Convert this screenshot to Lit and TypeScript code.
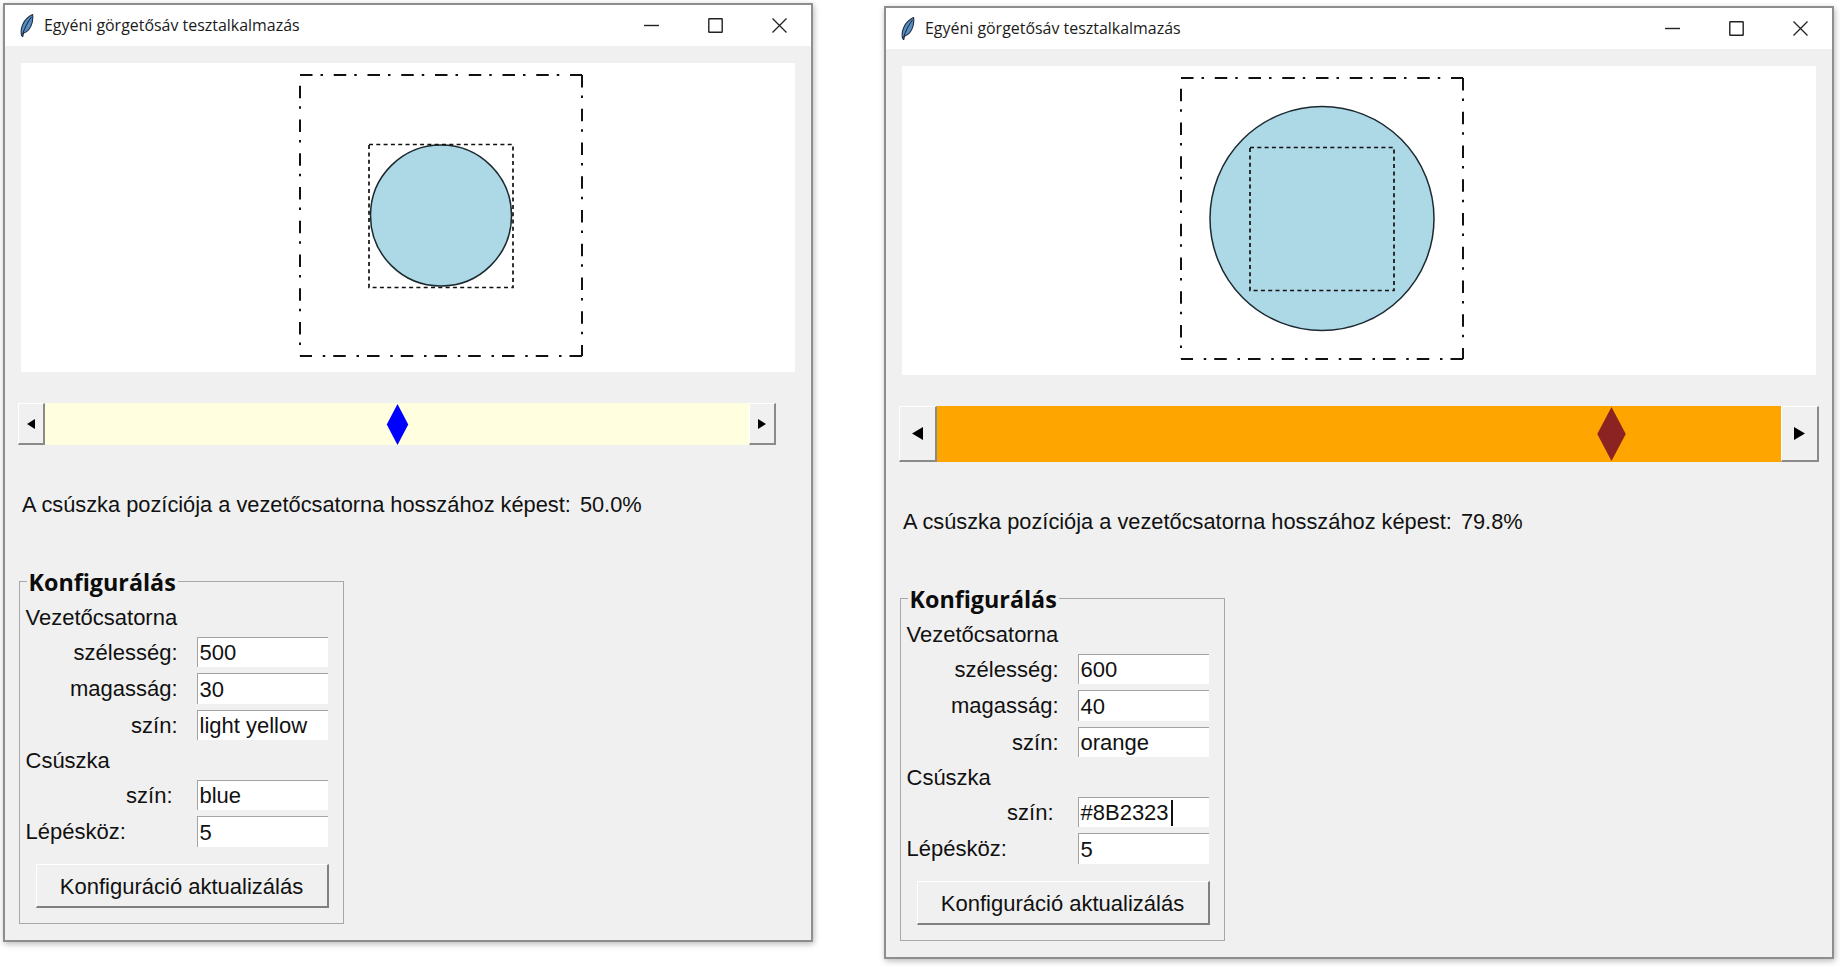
import { LitElement, html, css, svg } from "lit";
import { customElement, property } from "lit/decorators.js";

interface WindowConfig {
  width: number;
  circleR: number;
  trackWidth: number;
  trackHeight: number;
  arrowButton: number;
  arrowW: number;
  arrowH: number;
  trackColor: string;
  thumbColor: string;
  thumbW: number;
  thumbH: number;
  percent: number;
  trackWidthField: string;
  trackHeightField: string;
  trackColorField: string;
  thumbColorField: string;
  caret: boolean;
}

const FIRST: WindowConfig = {
  width: 810,
  circleR: 70.5,
  trackWidth: 704,
  trackHeight: 42,
  arrowButton: 27,
  arrowW: 8,
  arrowH: 10,
  trackColor: "#ffffe0",
  thumbColor: "#0000ff",
  thumbW: 21.5,
  thumbH: 41,
  percent: 50.0,
  trackWidthField: "500",
  trackHeightField: "30",
  trackColorField: "light yellow",
  thumbColorField: "blue",
  caret: false,
};

const SECOND: WindowConfig = {
  width: 950,
  circleR: 112,
  trackWidth: 844,
  trackHeight: 56,
  arrowButton: 38,
  arrowW: 11,
  arrowH: 13,
  trackColor: "#ffa500",
  thumbColor: "#8b2323",
  thumbW: 28.5,
  thumbH: 54,
  percent: 79.8,
  trackWidthField: "600",
  trackHeightField: "40",
  trackColorField: "orange",
  thumbColorField: "#8B2323",
  caret: true,
};

@customElement("test-window")
export class TestWindow extends LitElement {
  @property({ attribute: false }) config: WindowConfig = FIRST;

  static styles = css`
    :host {
      display: block;
    }
    .window {
      box-sizing: border-box;
      border: 2px solid #8e8e8e;
      background: #f0f0f0;
      box-shadow: 1px 2px 6px rgba(0, 0, 0, 0.28);
      padding-bottom: 16px;
      color: #111;
      font-family: "Liberation Sans", Arial, sans-serif;
      font-size: 22px;
    }
    .titlebar {
      display: flex;
      align-items: center;
      height: 41px;
      background: #fff;
    }
    .feather {
      margin-left: 15px;
      width: 14px;
      height: 23px;
      flex: none;
    }
    .title {
      margin-left: 10px;
      margin-bottom: 2px;
      flex: 1;
      font-family: "Open Sans", "Noto Sans", sans-serif;
      font-size: 15.95px;
      color: #1b1b1b;
      white-space: nowrap;
    }
    .caption {
      display: flex;
    }
    .caption span {
      display: flex;
      align-items: center;
      justify-content: center;
      width: 64px;
      height: 39px;
    }
    .canvas {
      display: block;
      box-sizing: border-box;
      margin: 17px 16px 0;
      width: calc(100% - 32px);
      height: 309px;
      background: #fff;
    }
    .scrollbar {
      display: flex;
      margin: 31px 0 0 13px;
    }
    .arrow {
      box-sizing: border-box;
      display: flex;
      align-items: center;
      justify-content: center;
      background: #f0f0f0;
      border-top: 1.5px solid #fff;
      border-left: 1.5px solid #fff;
      border-right: 2px solid #8a8a8a;
      border-bottom: 2px solid #8a8a8a;
    }
    .track {
      position: relative;
    }
    .thumb {
      position: absolute;
      top: 1px;
      display: block;
      transform: translateX(calc(-50% + 0.5px));
      overflow: visible;
    }
    .status {
      display: flex;
      gap: 9px;
      height: 30px;
      align-items: center;
      margin: 45px 0 0 17px;
      font-size: 21.8px;
      white-space: nowrap;
    }
    .frame {
      position: relative;
      box-sizing: border-box;
      width: 325px;
      height: 343px;
      margin: 61px 0 0 14px;
      padding: 21.5px 0 0 5.5px;
      border: 1.5px solid #a8a8a8;
    }
    .legend {
      position: absolute;
      left: 6.5px;
      top: -15px;
      padding: 0 2px;
      line-height: 30px;
      background: #f0f0f0;
      font-family: "Open Sans", "Noto Sans", sans-serif;
      font-size: 23.3px;
      font-weight: 700;
      color: #0c0c0c;
    }
    .form {
      display: grid;
      grid-template-columns: 152px 131px;
      column-gap: 19px;
      row-gap: 6px;
      grid-template-rows: 27px repeat(3, 30.5px) 27.5px repeat(2, 30.5px);
      align-items: center;
    }
    .heading {
      grid-column: 1 / 3;
      padding-top: 2px;
    }
    .label {
      padding-top: 2px;
      text-align: right;
    }
    .label.inset {
      padding-right: 5px;
    }
    .label.left {
      text-align: left;
    }
    .entry {
      box-sizing: border-box;
      display: flex;
      align-items: center;
      height: 30.5px;
      padding: 1.5px 0 0 2px;
      background: #fff;
      border-top: 1.5px solid #a3a3a3;
      border-left: 1.5px solid #a3a3a3;
      white-space: nowrap;
    }
    .caret {
      width: 2px;
      height: 26px;
      margin-left: 2px;
      background: #111;
    }
    .button {
      box-sizing: border-box;
      display: flex;
      align-items: center;
      justify-content: center;
      width: 293px;
      height: 44px;
      margin: 17.5px 0 0 10px;
      padding-top: 2px;
      background: #f0f0f0;
      border-top: 1.5px solid #fff;
      border-left: 1.5px solid #fff;
      border-right: 2px solid #808080;
      border-bottom: 2px solid #808080;
    }
  `;

  private renderCanvas(c: WindowConfig) {
    const cx = 420;
    const dashDot = "12.5 8 2.5 10.75";
    return html`<svg class="canvas" xmlns="http://www.w3.org/2000/svg">
      <circle cx=${cx} cy="152.5" r=${c.circleR} fill="#add8e6" stroke="#1c2a30" stroke-width="1.5"></circle>
      <g fill="none" stroke="#111" stroke-width="2">
        <path d="M279 12H561" stroke-dasharray=${dashDot}></path>
        <path d="M561 12V293" stroke-dasharray=${dashDot}></path>
        <path d="M561 293H279" stroke-dasharray=${dashDot}></path>
        <path d="M279 12V293" stroke-dasharray=${dashDot} stroke-dashoffset="23"></path>
      </g>
      <rect x="348" y="81.5" width="144" height="143" fill="none" stroke="#111" stroke-width="1.7" stroke-dasharray="4 3.3"></rect>
    </svg>`;
  }

  private renderArrow(c: WindowConfig, dir: "left" | "right") {
    const w = c.arrowW;
    const h = c.arrowH;
    const points = dir === "left" ? `${w},0 ${w},${h} 0,${h / 2}` : `0,0 0,${h} ${w},${h / 2}`;
    return html`<div class="arrow" style="width:${c.arrowButton}px;height:${c.trackHeight}px">
      <svg width=${w} height=${h} viewBox="0 0 ${w} ${h}"><polygon points=${points} fill="#000"></polygon></svg>
    </div>`;
  }

  render() {
    const c = this.config;
    const tw = c.thumbW;
    const th = c.thumbH;
    return html`<div class="window" style="width:${c.width}px">
      <div class="titlebar">
        <svg class="feather" viewBox="0 0 14 23">
          <path d="M1.6 21.5C-0.2 14 3.5 5 12.6 0.6 13.6 8 10.5 17 3.4 19.3L2.7 22.8Z" fill="#5b8fc4" stroke="#1d2f45" stroke-width="1.1" stroke-linejoin="round"></path>
          <path d="M2.6 20.5C4.5 14 7.5 8 11.5 3" fill="none" stroke="#13202f" stroke-width="1"></path>
        </svg>
        <div class="title">Egyéni görgetősáv tesztalkalmazás</div>
        <div class="caption">
          <span><svg width="15" height="15" viewBox="0 0 15 15"><path d="M0 7.5H15" stroke="#222" stroke-width="1.4"></path></svg></span>
          <span><svg width="15" height="15" viewBox="0 0 15 15"><rect x="0.8" y="0.8" width="13.4" height="13.4" rx="0.5" fill="none" stroke="#222" stroke-width="1.4"></rect></svg></span>
          <span><svg width="15" height="15" viewBox="0 0 15 15"><path d="M0.5 0.5L14.5 14.5M14.5 0.5L0.5 14.5" stroke="#222" stroke-width="1.3"></path></svg></span>
        </div>
      </div>
      ${this.renderCanvas(c)}
      <div class="scrollbar">
        ${this.renderArrow(c, "left")}
        <div class="track" style="width:${c.trackWidth}px;height:${c.trackHeight}px;background:${c.trackColor}">
          <svg class="thumb" style="left:${c.percent}%" width=${tw} height=${th} viewBox="0 0 ${tw} ${th}">
            ${svg`<polygon points="${tw / 2},0 ${tw},${th / 2} ${tw / 2},${th} 0,${th / 2}" fill=${c.thumbColor}></polygon>`}
          </svg>
        </div>
        ${this.renderArrow(c, "right")}
      </div>
      <div class="status">
        <span>A csúszka pozíciója a vezetőcsatorna hosszához képest:</span>
        <span>${c.percent.toFixed(1)}%</span>
      </div>
      <div class="frame">
        <div class="legend">Konfigurálás</div>
        <div class="form">
          <div class="heading">Vezetőcsatorna</div>
          <div class="label">szélesség:</div>
          <div class="entry">${c.trackWidthField}</div>
          <div class="label">magasság:</div>
          <div class="entry">${c.trackHeightField}</div>
          <div class="label">szín:</div>
          <div class="entry">${c.trackColorField}</div>
          <div class="heading">Csúszka</div>
          <div class="label inset">szín:</div>
          <div class="entry">${c.thumbColorField}${c.caret ? html`<span class="caret"></span>` : ""}</div>
          <div class="label left">Lépésköz:</div>
          <div class="entry">5</div>
        </div>
        <div class="button">Konfiguráció aktualizálás</div>
      </div>
    </div>`;
  }
}

@customElement("app-root")
export class AppRoot extends LitElement {
  static styles = css`
    :host {
      display: block;
      height: 967px;
      background: #fff;
    }
    .desktop {
      display: flex;
      align-items: flex-start;
    }
    .first {
      margin: 3px 0 0 3px;
    }
    .second {
      margin: 6px 0 0 71px;
    }
  `;

  render() {
    return html`<div class="desktop">
      <test-window class="first" .config=${FIRST}></test-window>
      <test-window class="second" .config=${SECOND}></test-window>
    </div>`;
  }
}
